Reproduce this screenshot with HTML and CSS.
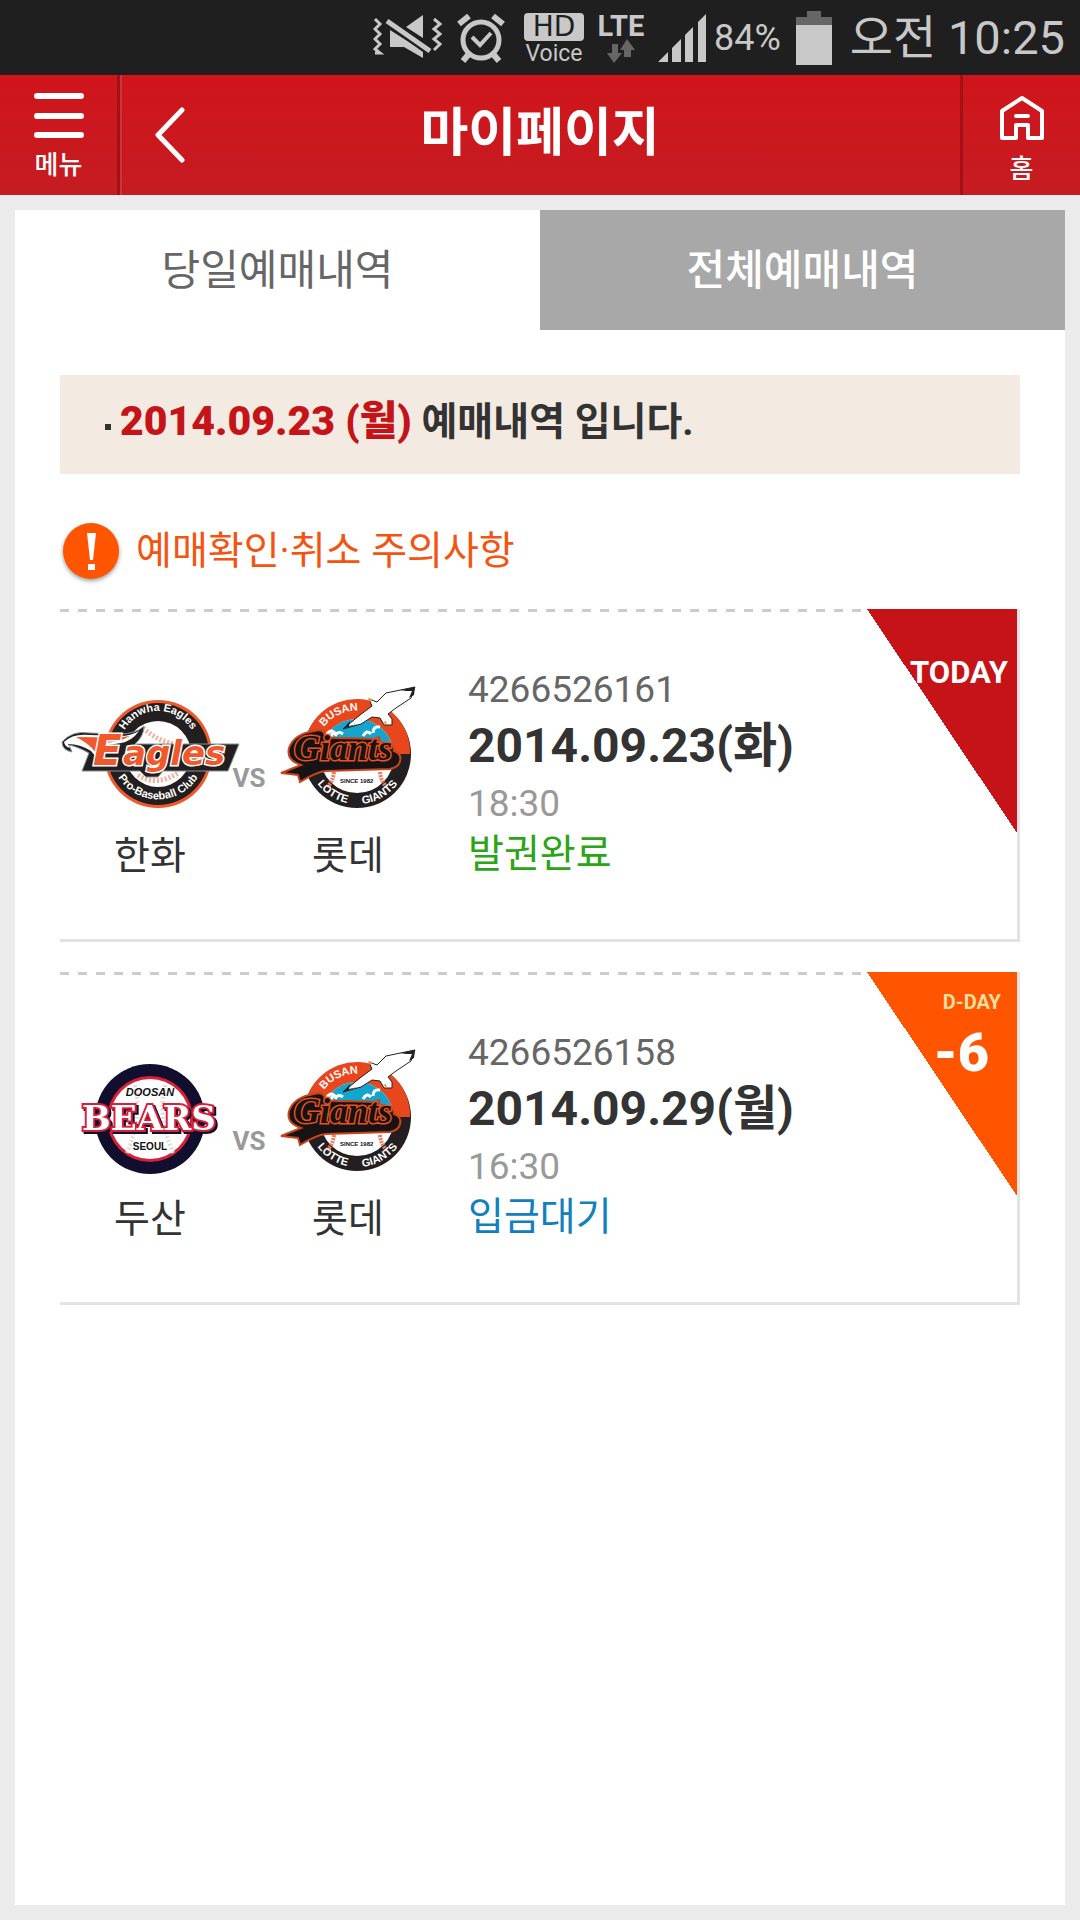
FILE: index.html
```html
<!DOCTYPE html>
<html lang="ko">
<head>
    <meta charset="UTF-8">
    <meta name="viewport" content="width=device-width, initial-scale=1.0">
    <title>마이페이지</title>
    <link rel="stylesheet" href="styles.css">
</head>
<body>

    <!-- Shared logo -->
    <svg class="defs" width="0" height="0" aria-hidden="true">
        <symbol id="giants" viewBox="0 0 180 130">
            <circle cx="99" cy="70" r="54" fill="#231f20"/>
            <path d="M46 66A53 53 0 0 1 152 70L99 70Z" fill="#e8471d"/>
            <circle cx="99" cy="72" r="37" fill="#fff"/>
            <path d="M62 72A37 37 0 0 1 136 72Z" fill="#14a5cf"/>
            <path d="M68 52q4-8 9-3q-5 0-3 5m3-2q3-6 8-2M105 52q4-7 8-2m2-1q0-7 7-6" fill="none" stroke="#fff" stroke-width="3"/>
            <path d="M76 88q-1 10-7 15M122 88q1 10 7 15" fill="none" stroke="#ee7a5c" stroke-width="4" stroke-dasharray="2 1"/>
            <path id="busanArc" d="M58 60A42 42 0 0 1 128 38" fill="none"/>
            <path id="lotteArc" d="M50 77A50 50 0 0 0 149 77" fill="none"/>
            <text class="logo-sans" font-size="11" fill="#fff"><textPath href="#busanArc" startOffset="19">BUSAN</textPath></text>
            <text class="logo-sans" font-size="11" fill="#fff"><textPath href="#lotteArc" startOffset="50%" text-anchor="middle">LOTTE&nbsp;&nbsp;&nbsp;&nbsp;&nbsp;GIANTS</textPath></text>
            <text class="logo-sans" x="82" y="99" font-size="6" fill="#111">SINCE 1982</text>
            <path d="M23 89L43 81Q28 76 31 64Q36 50 56 47Q66 44 67 52Q76 55 88 54L116 55L121 53L122 58Q136 58 136 67Q144 70 142 77Q141 83 132 85L68 87Q58 88 42 98L40 91Z" fill="#171314" stroke="#c8441a" stroke-width="2"/>
            <text class="logo-script" x="36" y="76" font-size="36">Giants</text>
            <path d="M157 3L128 9L119 18L111 15L114 22L102 31L85 45L103 40L114 33L122 34L126 41L134 41L134 35L130 30L138 24L153 14Z" fill="#fff" stroke="#222" stroke-width="1"/>
            <path d="M157 3L142 6L148 7L154 7L151 14L156 11ZM85 45L92 37L91 42L100 40Z" fill="#222"/>
            <path d="M110 14l5 1l-3 3zM125 38l3-1l1 4z" fill="#d9a437"/>
        </symbol>
    </svg>

    <div class="status-bar">
        <svg class="status-icon" width="70" height="50" viewBox="0 0 70 50">
            <path d="M2 6l5 5l-5 5l5 5l-5 5l5 5l-5 5l5 4h-5M61 6l6 5l-6 5l6 5l-6 5l6 5l-6 6" fill="none" stroke="#c8c8c8" stroke-width="3"/>
            <path d="M17 17L17 34H31L50 45V38ZM50 2L33 14L50 25Z" fill="#c8c8c8"/>
            <path d="M14 7L57 38" stroke="#1f1f1f" stroke-width="10"/>
            <path d="M14 8L57 38" stroke="#c8c8c8" stroke-width="5"/>
        </svg>
        <svg class="status-icon" width="50" height="50" viewBox="0 0 50 50">
            <g fill="none" stroke="#c8c8c8">
                <circle cx="25" cy="27" r="18" stroke-width="5"/>
                <path d="M16 24l8 8l11-12" stroke-width="4"/>
                <path d="M3 11L13 3M47 11L37 3M12 42l-5 6M38 42l5 6" stroke-width="6"/>
            </g>
        </svg>
        <div class="hd-voice">
            <span class="hd">HD</span>
            <span class="voice">Voice</span>
        </div>
        <div class="lte">
            <span>LTE</span>
            <svg width="28" height="24" viewBox="0 0 28 24">
                <path d="M5 5h6v9h4l-8 10l-7-10h5zM17 18V11h-4L20 0l8 11h-4v7z" fill="#666"/>
            </svg>
        </div>
        <svg class="status-icon signal" width="48" height="50" viewBox="0 0 48 50">
            <path d="M0 49L10 39V49ZM14 35L23 26V49H14ZM27 22L35 14V49H27ZM40 9L48 1V49H40Z" fill="#c8c8c8"/>
        </svg>
        <span class="percent">84%</span>
        <svg class="battery" width="36" height="54" viewBox="0 0 36 54">
            <path d="M11 0h14v6h11v8H0V6h11z" fill="#666"/>
            <path d="M0 14h36v40H0z" fill="#c8c8c8"/>
        </svg>
        <span class="clock">오전 10:25</span>
    </div>

    <header class="header">
        <button class="menu-btn" type="button">
            <svg width="50" height="48" viewBox="0 0 50 48">
                <path d="M3 4H47M3 24H47M3 43H47" stroke="#fff" stroke-width="6" stroke-linecap="round"/>
            </svg>
            메뉴
        </button>
        <button class="back-btn" type="button" aria-label="뒤로">
            <svg width="30" height="56" viewBox="0 0 30 56">
                <path d="M27 3L3 28L27 53" fill="none" stroke="#fff" stroke-width="5" stroke-linecap="round" stroke-linejoin="round"/>
            </svg>
        </button>
        <h1>마이페이지</h1>
        <a class="home-btn" href="#">
            <svg width="46" height="46" viewBox="0 0 46 46">
                <path d="M3 16L23 3L43 16V43H29V30H17V43H3Z" fill="none" stroke="#fff" stroke-width="4" stroke-linejoin="round"/>
                <path d="M17 21H29" stroke="#fff" stroke-width="4" stroke-linecap="round"/>
            </svg>
            홈
        </a>
    </header>

    <main class="panel">
        <div class="tabs">
            <button class="tab active" type="button">당일예매내역</button>
            <button class="tab" type="button">전체예매내역</button>
        </div>

        <div class="content">
            <p class="date-box"><i class="bullet"></i><span><strong>2014.09.23 (월)</strong> 예매내역 입니다.</span></p>

            <a class="notice" href="#">
                <svg width="64" height="64" viewBox="0 0 64 64">
                    <circle cx="31" cy="32" r="28" fill="#ff5500"/>
                    <path d="M27 14H36L33 41H30ZM28 45H35V51H28Z" fill="#fff"/>
                </svg>
                예매확인·취소 주의사항
            </a>

            <ul class="cards">
                <li class="card">
                    <div class="match">
                        <div class="team">
                            <svg width="180" height="130" viewBox="0 0 180 130">
                                <circle cx="98" cy="70" r="54" fill="#f0592b"/>
                                <circle cx="98" cy="70" r="51" fill="#231f20"/>
                                <circle cx="98" cy="70" r="33" fill="#fff"/>
                                <path d="M83 44q16 14 32 16M78 91q18 12 40-2" fill="none" stroke="#f4b09a" stroke-width="5" stroke-dasharray="2 2"/>
                                <path id="hanwhaArc" d="M59 66A39 39 0 0 1 137 66" fill="none"/>
                                <path id="clubArc" d="M52 78A47 47 0 0 0 144 78" fill="none"/>
                                <text class="logo-sans" font-size="11" fill="#fff"><textPath href="#hanwhaArc" startOffset="50%" text-anchor="middle">Hanwha Eagles</textPath></text>
                                <text class="logo-sans" font-size="11" fill="#fff"><textPath href="#clubArc" startOffset="50%" text-anchor="middle">Pro-Baseball Club</textPath></text>
                                <path d="M2 58Q12 46 30 49L60 50Q76 50 84 42Q84 52 75 60H179L168 87H103L98 93H86L80 87H22L29 69Q16 62 9 61L12 68Q2 66 2 58Z" fill="#231f20" stroke="#87919a" stroke-width="1"/>
                                <path d="M4 58Q13 49 30 51L60 52Q71 52 79 47Q72 57 61 59L42 62L37 74L31 67Q20 60 8 60L10 64Q5 63 4 58Z" fill="#fff"/>
                                <path d="M16 53Q38 53 56 54L70 52Q60 58 44 59L37 70Q30 60 16 53Z" fill="#f0592b"/>
                                <text class="logo-eagles" y="81"><tspan x="33" font-size="42">E</tspan><tspan x="63" font-size="34">agles</tspan></text>
                            </svg>
                            <span>한화</span>
                        </div>
                        <span class="vs">VS</span>
                        <div class="team">
                            <svg width="180" height="130"><use href="#giants"/></svg>
                            <span>롯데</span>
                        </div>
                    </div>
                    <div class="info">
                        <p class="number">4266526161</p>
                        <p class="date">2014.09.23(화)</p>
                        <p class="time">18:30</p>
                        <p class="state done">발권완료</p>
                    </div>
                    <div class="badge today">TODAY</div>
                </li>

                <li class="card">
                    <div class="match">
                        <div class="team">
                            <svg width="180" height="130" viewBox="0 0 180 130">
                                <circle cx="90" cy="72" r="55" fill="#110f2d"/>
                                <circle cx="90" cy="72" r="43" fill="#d9203a"/>
                                <circle cx="90" cy="72" r="40" fill="#fff"/>
                                <path d="M75 38q8 30-8 68M105 38q-8 30 8 68" fill="none" stroke="#ddd" stroke-width="4" stroke-dasharray="2 2"/>
                                <text class="logo-doosan" x="90" y="49" font-size="11">DOOSAN</text>
                                <text class="logo-bears" x="89" y="83" font-size="34">BEARS</text>
                                <text class="logo-seoul" x="90" y="103" font-size="10">SEOUL</text>
                            </svg>
                            <span>두산</span>
                        </div>
                        <span class="vs">VS</span>
                        <div class="team">
                            <svg width="180" height="130"><use href="#giants"/></svg>
                            <span>롯데</span>
                        </div>
                    </div>
                    <div class="info">
                        <p class="number">4266526158</p>
                        <p class="date">2014.09.29(월)</p>
                        <p class="time">16:30</p>
                        <p class="state waiting">입금대기</p>
                    </div>
                    <div class="badge dday"><small>D-DAY</small><b>-6</b></div>
                </li>
            </ul>
        </div>
    </main>

</body>
</html>
```
FILE: styles.css
```css
* {
    box-sizing: border-box;
    margin: 0;
    padding: 0;
}

body {
    display: flex;
    flex-direction: column;
    min-height: 100vh;
    background-color: #ebebeb;
    color: #333;
    font-family: Roboto, "Noto Sans CJK KR", sans-serif;
}

button {
    border: none;
    background: none;
    font-family: inherit;
    cursor: pointer;
}

a {
    text-decoration: none;
}

.defs {
    position: absolute;
}

/* Status bar */
.status-bar {
    display: flex;
    justify-content: flex-end;
    align-items: center;
    height: 75px;
    padding-right: 15px;
    background-color: #1f1f1f;
    color: #c8c8c8;
}

.status-icon {
    margin-right: 13px;
}

.hd-voice {
    display: flex;
    flex-direction: column;
    align-items: center;
    gap: 1px;
    width: 60px;
    margin: 3px 13px 0 5px;
}

.hd {
    width: 100%;
    border-radius: 4px;
    background-color: #c8c8c8;
    color: #1f1f1f;
    font-family: "DejaVu Sans", sans-serif;
    font-size: 28px;
    line-height: 28px;
    text-align: center;
}

.voice {
    font-size: 23px;
    line-height: 24px;
}

.lte {
    display: flex;
    flex-direction: column;
    align-items: center;
    width: 48px;
    margin-right: 13px;
    font-size: 29px;
    font-weight: bold;
    line-height: 26px;
}

.signal {
    margin-right: 8px;
}

.percent {
    margin-right: 15px;
    font-size: 36px;
}

.battery {
    margin-right: 18px;
}

.clock {
    font-size: 47px;
    line-height: 72px;
}

/* Header */
.header {
    display: grid;
    grid-template-columns: 120px 102px 1fr 102px 120px;
    height: 120px;
    background: linear-gradient(#d0151b, #c41c22);
    color: #fff;
}

.header h1 {
    font-size: 52px;
    font-weight: bold;
    line-height: 118px;
    text-align: center;
}

.menu-btn,
.home-btn {
    display: flex;
    flex-direction: column;
    align-items: center;
    color: #fff;
    font-size: 26px;
    font-weight: 500;
    line-height: 40px;
}

.menu-btn {
    gap: 5px;
    padding-top: 17px;
    border-right: 3px solid #a01217;
}

.home-btn {
    grid-column: 5;
    gap: 8px;
    padding-top: 20px;
    border-left: 3px solid #a01217;
}

.back-btn {
    padding-left: 33px;
    text-align: left;
    border-left: 2px solid #d0333a;
}

.back-btn svg {
    display: block;
}

/* Panel */
.panel {
    flex: 1;
    margin: 15px;
    background-color: #fff;
}

.tabs {
    display: flex;
}

.tab {
    flex: 1;
    height: 120px;
    padding-top: 2px;
    background-color: #a8a8a8;
    color: #fff;
    font-size: 42px;
    font-weight: 500;
    line-height: 60px;
}

.tab.active {
    background-color: #fff;
    color: #666;
    font-weight: 400;
}

.content {
    padding: 45px;
}

.date-box {
    display: flex;
    align-items: center;
    gap: 9px;
    padding: 16px 45px 22px;
    background-color: #f3ebe1;
    font-size: 39px;
    font-weight: bold;
    line-height: 60px;
}

.date-box strong {
    color: #c51419;
    font-size: 41px;
}

.bullet {
    width: 6px;
    height: 6px;
    margin-top: 10px;
    background-color: #333;
}

.notice {
    display: flex;
    align-items: center;
    gap: 12px;
    margin: 45px 0 26px;
    color: #f55310;
    font-size: 39px;
    line-height: 60px;
}

.notice svg {
    filter: drop-shadow(0 2px 2px #999);
}

/* Ticket cards */
.cards {
    display: grid;
    gap: 30px;
    list-style: none;
}

.card {
    position: relative;
    display: flex;
    gap: 30px;
    height: 333px;
    padding-top: 56px;
    border-right: 3px solid #e3e3e3;
    border-bottom: 3px solid #e3e3e3;
    background: repeating-linear-gradient(90deg, #ccc 0, #ccc 9px, #fff 9px, #fff 18px) top / 100% 3px no-repeat;
}

.match {
    display: grid;
    grid-template-columns: 180px 18px 180px;
    justify-items: center;
    padding-top: 19px;
}

.team {
    display: flex;
    flex-direction: column;
    align-items: center;
    gap: 17px;
    font-size: 39px;
    line-height: 50px;
}

.vs {
    padding-top: 64px;
    color: #999;
    font-size: 26px;
    font-weight: bold;
    line-height: 60px;
}

.number,
.time {
    font-size: 37px;
    line-height: 50px;
}

.number {
    color: #666;
}

.time {
    padding-top: 2px;
    color: #999;
}

.date {
    font-size: 48px;
    font-weight: bold;
    line-height: 62px;
}

.state {
    font-size: 39px;
    line-height: 50px;
}

.done {
    color: #2aa515;
}

.waiting {
    color: #1380bd;
}

/* Corner badge */
.badge {
    position: absolute;
    top: 0;
    right: 0;
    display: flex;
    flex-direction: column;
    width: 150px;
    height: 224px;
    color: #fff;
    font-weight: bold;
    text-align: right;
}

.today {
    padding: 39px 9px 0 0;
    background: linear-gradient(to top right, #fff 50%, #c51318 50%);
    font-size: 31px;
    line-height: 50px;
}

.dday {
    padding: 15px 16px 0 0;
    background: linear-gradient(to top right, #fff 50%, #ff5500 50%);
}

.dday small {
    color: #ffdf9f;
    font-size: 20px;
    line-height: 30px;
}

.dday b {
    padding-right: 12px;
    font-size: 54px;
    line-height: 72px;
}

/* Logo lettering */
.logo-sans {
    font-family: "Liberation Sans", sans-serif;
    font-weight: bold;
}

.logo-script {
    fill: #171314;
    stroke: #e8511d;
    stroke-width: 3px;
    paint-order: stroke;
    font-family: "Liberation Serif", serif;
    font-style: italic;
    font-weight: bold;
}

.logo-eagles {
    fill: #f0592b;
    stroke: #fff;
    stroke-width: 3px;
    paint-order: stroke;
    font-family: "DejaVu Sans", sans-serif;
    font-style: italic;
    font-weight: bold;
}

.logo-doosan,
.logo-seoul {
    fill: #111;
    font-family: "Liberation Sans", sans-serif;
    font-weight: bold;
    text-anchor: middle;
}

.logo-doosan {
    font-style: italic;
}

.logo-bears {
    fill: #fff;
    stroke: #d9203a;
    stroke-width: 4px;
    paint-order: stroke;
    filter: drop-shadow(2px 2px 0 #110f2d);
    font-family: "DejaVu Serif", serif;
    font-weight: bold;
    text-anchor: middle;
}
```
